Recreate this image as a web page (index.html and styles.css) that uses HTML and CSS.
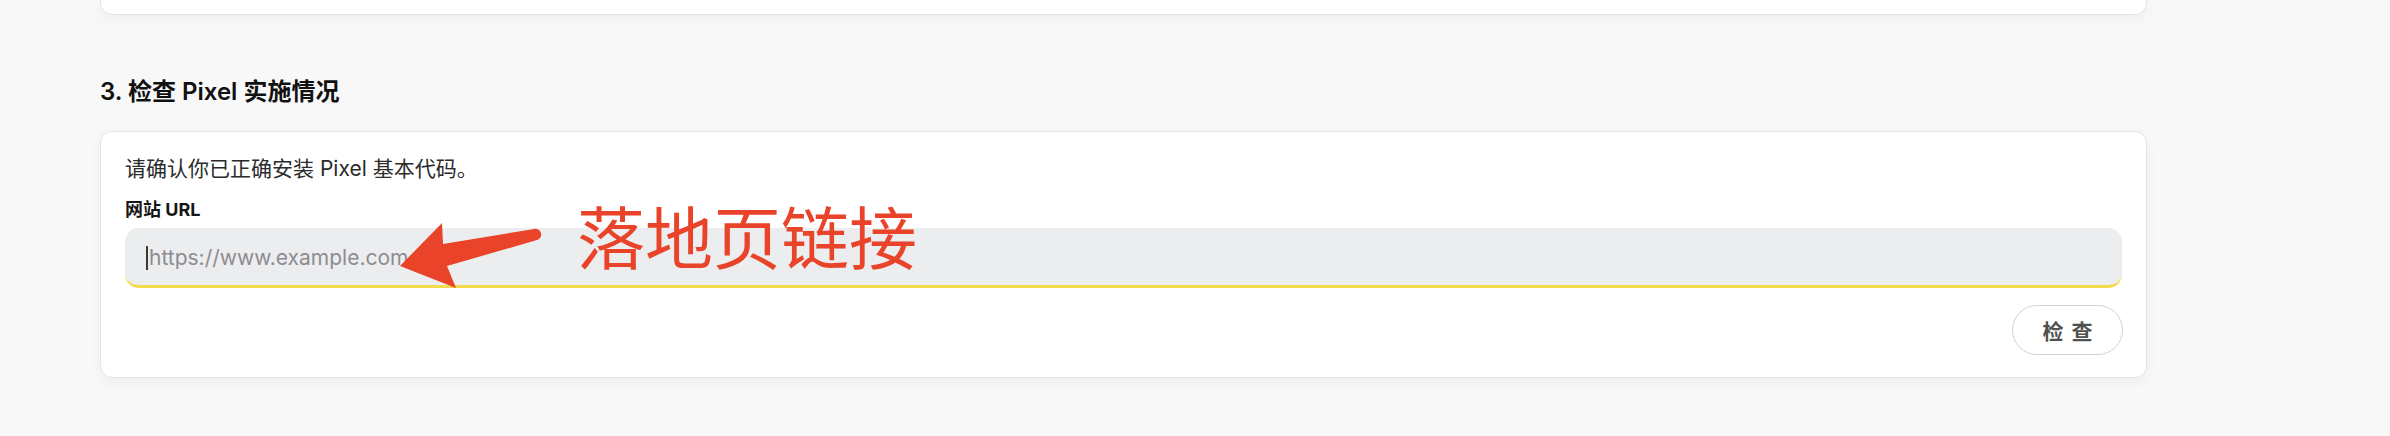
FILE: index.html
```html
<!DOCTYPE html>
<html lang="zh-CN">
<head>
<meta charset="utf-8">
<title>检查 Pixel 实施情况</title>
<link rel="stylesheet" href="styles.css">
</head>
<body>
<div class="page">
  <div class="card card-prev"></div>
  <h2 class="section-title">3. 检查 Pixel 实施情况</h2>
  <div class="card card-check">
    <p class="desc">请确认你已正确安装 Pixel 基本代码。</p>
    <label class="field-label">网站 URL</label>
    <div class="url-input"><span class="caret"></span><span class="placeholder">https://www.example.com</span></div>
    <div class="actions"><button class="btn-check">检查</button></div>
  </div>
</div>
<div class="annotation">
  <svg class="arrow" width="155" height="80" viewBox="0 0 155 80" xmlns="http://www.w3.org/2000/svg">
    <path d="M5,51 L47,8 L48,29 L139,14 A5.7,5.7 0 0 1 142,25 L52,51 L61,73 Z" fill="#e9432a"/>
  </svg>
  <span class="note">落地页链接</span>
</div>
</body>
</html>
```
FILE: styles.css
```css
* { box-sizing: border-box; }
html, body { margin: 0; padding: 0; }
body {
  background: #f8f8f8;
  font-family: "Inter", "Noto Sans CJK SC", sans-serif;
  color: #1a1a1a;
  position: relative;
  width: 2390px;
  height: 436px;
  overflow: hidden;
}
.page {
  width: 2047px;
  margin-left: 100px;
}
.card {
  background: #fff;
  border: 1px solid #e4e4e4;
  border-radius: 12px;
  box-shadow: 0 4px 14px rgba(0, 0, 0, 0.045);
}
.card-prev {
  height: 15px;
  border-top: 0;
  border-radius: 0 0 12px 12px;
}
.section-title {
  margin: 61px 0 23px;
  font-size: 24px;
  line-height: 32px;
  font-weight: 600;
  color: #111;
}
.card-check {
  padding: 24px 24px 22px;
  display: flex;
  flex-direction: column;
}
.desc {
  margin: 0 0 16px;
  font-size: 21px;
  line-height: 26px;
  color: #2b2b2b;
}
.field-label {
  font-size: 18px;
  line-height: 24px;
  font-weight: 700;
  color: #161616;
  margin-bottom: 6px;
}
.url-input {
  height: 60px;
  background: #ecedef;
  border-bottom: 3px solid #f3d94c;
  border-radius: 14px;
  display: flex;
  align-items: center;
  padding-left: 21px;
  padding-top: 2px;
}
.caret {
  width: 2px;
  height: 24px;
  background: #3a3a3a;
  margin-right: 1px;
}
.placeholder {
  font-size: 21px;
  color: #8c8c90;
  font-weight: 400;
}
.actions {
  display: flex;
  justify-content: flex-end;
  margin-top: 17px;
}
.btn-check {
  width: 111px;
  height: 50px;
  border: 1.5px solid #d3d3d3;
  border-radius: 25px;
  background: #fff;
  font-family: "Noto Sans CJK SC", sans-serif;
  font-size: 21px;
  font-weight: 700;
  color: #505050;
  letter-spacing: 8px;
  text-indent: 8px;
  padding: 0;
  margin-right: -1px;
}
.annotation {
  position: absolute;
  left: 0;
  top: 0;
}
.arrow {
  position: absolute;
  left: 395px;
  top: 215px;
}
.note {
  position: absolute;
  left: 577px;
  top: 201px;
  font-family: "Noto Sans CJK SC", sans-serif;
  font-size: 68px;
  line-height: 68px;
  font-weight: 400;
  color: #e9432a;
  white-space: nowrap;
}
```
